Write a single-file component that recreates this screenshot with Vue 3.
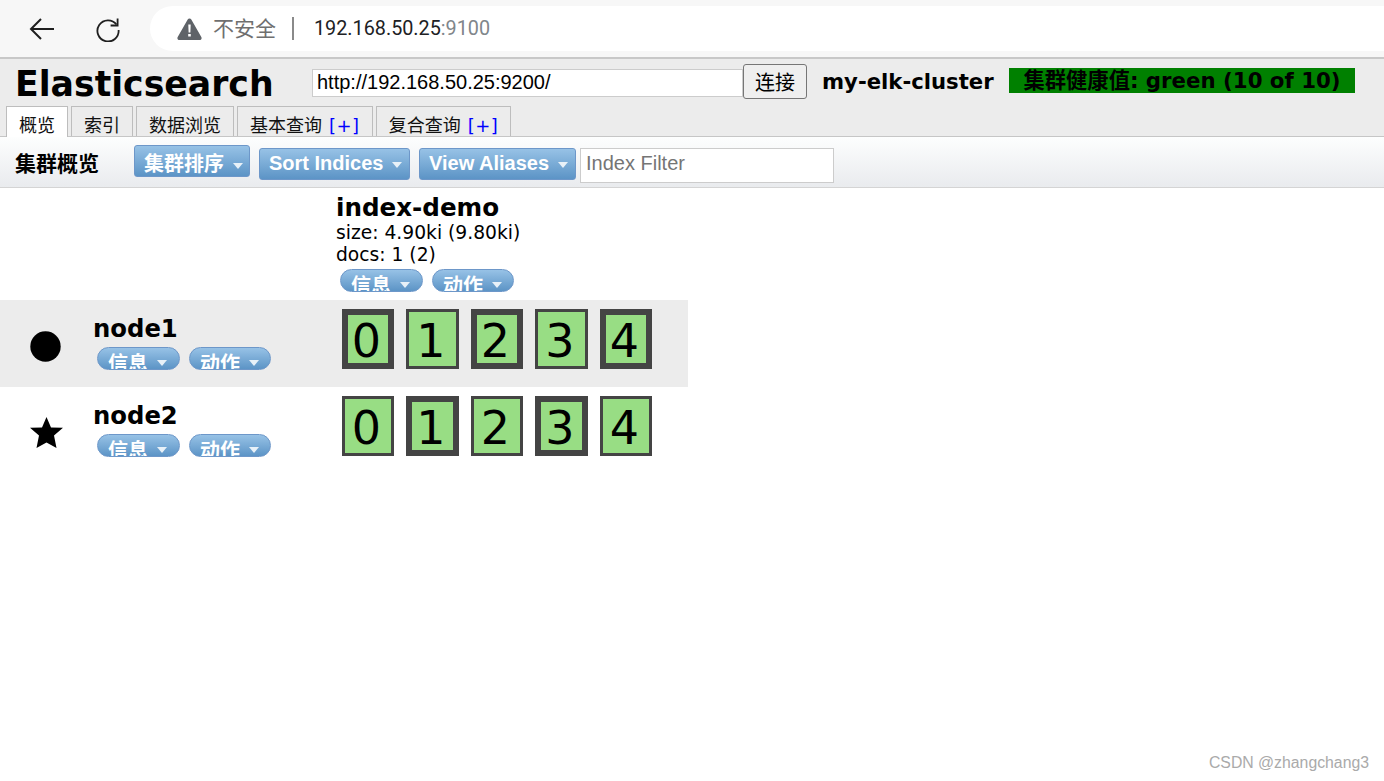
<script setup>
const tabs = [
  { label: '概览', active: true },
  { label: '索引' },
  { label: '数据浏览' },
  { label: '基本查询', plus: true },
  { label: '复合查询', plus: true },
]
const nodes = [
  { name: 'node1', shape: 'circle', alt: true, thick: [true, false, true, false, true] },
  { name: 'node2', shape: 'star', alt: false, thick: [false, true, false, true, false] },
]
</script>

<template>
  <div class="page">
    <div class="chrome">
      <svg class="back" width="28" height="24" viewBox="0 0 28 24"><path d="M26 12H3M13 2 3 12l10 10" fill="none" stroke="#1f1f1f" stroke-width="2"/></svg>
      <svg class="reload" width="26" height="26" viewBox="0 0 26 26"><path d="M21.5 8.5A10.6 10.6 0 1 0 23.6 14" fill="none" stroke="#1f1f1f" stroke-width="1.8"/><path d="M22.6 2.5v7h-7" fill="none" stroke="#1f1f1f" stroke-width="1.8"/></svg>
      <div class="omni">
        <svg class="warn" width="25" height="22" viewBox="0 0 25 22"><path d="M12.5 0.5c.8 0 1.4.4 1.8 1l10 17.6c.8 1.4-.1 2.9-1.7 2.9H2.400c-1.600 0-2.500-1.500-1.700-2.900l10-17.600c.4-.6 1-1 1.800-1z" fill="#5f6368"/><path d="M11.300 6.500h2.400l-.3 8h-1.800zM11.200 16h2.600v2.600h-2.600z" fill="#fff"/></svg>
        <span class="insecure">不安全</span>
        <span class="sep"></span>
        <span class="url">192.168.50.25<span class="port">:9100</span></span>
      </div>
    </div>

    <header class="head">
      <div class="head-top">
        <h1 class="title">Elasticsearch</h1>
        <input class="base-uri" value="http://192.168.50.25:9200/" />
        <button class="connect">连接</button>
        <span class="cluster">my-elk-cluster</span>
        <span class="health">集群健康值: green (10 of 10)</span>
      </div>
      <nav class="tabs">
        <div v-for="t in tabs" :key="t.label" class="tab" :class="{ active: t.active }">
          {{ t.label }}<span v-if="t.plus" class="plus">[+]</span>
        </div>
      </nav>
    </header>

    <div class="toolbar">
      <span class="tool-label">集群概览</span>
      <button class="drop first">集群排序<i class="caret"></i></button>
      <button class="drop sort">Sort Indices<i class="caret"></i></button>
      <button class="drop alias">View Aliases<i class="caret"></i></button>
      <input class="filter" placeholder="Index Filter" />
    </div>

    <section class="overview">
      <div class="row head-row">
        <div class="index-info">
          <h2 class="index-name">index-demo</h2>
          <div class="meta">size: 4.90ki (9.80ki)</div>
          <div class="meta">docs: 1 (2)</div>
          <div class="pills">
            <button class="pill one">信息<i class="caret small"></i></button>
            <button class="pill two">动作<i class="caret small"></i></button>
          </div>
        </div>
      </div>
      <div v-for="n in nodes" :key="n.name" class="row node" :class="{ alt: n.alt }">
        <div class="status">
          <svg v-if="n.shape === 'circle'" width="31" height="31" viewBox="0 0 31 31"><circle cx="15.500" cy="15.500" r="15.200"/></svg>
          <svg v-else class="star" width="34" height="32" viewBox="0 0 34 32"><path d="M16.500 0 21 10.500 33 10.700 24 18.500 26.500 31 16.500 25.500 6.500 31 9 18.500 0 10.700 12 10.500z"/></svg>
        </div>
        <div class="node-info">
          <div class="node-name">{{ n.name }}</div>
          <div class="pills">
            <button class="pill one">信息<i class="caret small"></i></button>
            <button class="pill two">动作<i class="caret small"></i></button>
          </div>
        </div>
        <div class="shards">
          <div v-for="(t, i) in n.thick" :key="i" class="shard" :class="{ thick: t }">{{ i }}</div>
        </div>
      </div>
    </section>

    <div class="mark">CSDN @zhangchang3</div>
  </div>
</template>

<style>
html, body { margin: 0; background: #fff; overflow: hidden; }
</style>

<style scoped>
.page {
  position: relative;
  width: 1384px;
  height: 781px;
  overflow: hidden;
  background: #fff;
  font-family: "DejaVu Sans", "Noto Sans CJK SC", sans-serif;
  color: #000;
}
.chrome {
  height: 57px;
  background: #f7f7f7;
  border-bottom: 2px solid #c8c8c8;
  display: flex;
  align-items: center;
  padding-left: 28px;
}
.back { flex: none; }
.reload { flex: none; margin-left: 39px; }
.omni {
  flex: none;
  width: 1300px;
  height: 45px;
  margin-left: 29px;
  background: #fff;
  border-radius: 23px;
  display: flex;
  align-items: center;
  padding-left: 27px;
  box-sizing: border-box;
  font-family: Roboto, "Noto Sans CJK SC", sans-serif;
}
.warn { flex: none; }
.insecure { margin: 0 0 3px 11px; font-size: 21px; color: #6f6f6f; width: 64px; white-space: nowrap; }
.sep { width: 2px; height: 23px; background: #8a8a8a; margin-left: 15px; }
.url { margin-left: 20px; font-size: 19.800px; color: #202124; }
.port { color: #80868b; }

.head { background: #ececec; height: 77px; display: flex; flex-direction: column; }
.head-top { height: 47px; box-sizing: border-box; padding-bottom: 2px; display: flex; align-items: center; }
.title { margin: 5px 0 0 15px; width: 297px; flex: none; font-size: 34.700px; line-height: 42px; font-weight: 700; white-space: nowrap; }
.base-uri {
  width: 431px; height: 28px; box-sizing: border-box; margin: 3px 0 0;
  border: 1px solid #ccc; padding: 0 4px 2px; background: #fff;
  font: 20px "Liberation Sans", sans-serif; color: #000; outline: none; flex: none;
}
.connect {
  width: 64px; height: 35px; flex: none; box-sizing: border-box; margin: 0; padding: 0;
  border: 1px solid #767676; border-radius: 3px; background: #efefef; color: #000;
  font: 20px "Noto Sans CJK SC", sans-serif;
}
.cluster { margin-left: 15px; width: 187px; flex: none; font-size: 21.200px; font-weight: 700; white-space: nowrap; }
.health {
  width: 346px; height: 25px; margin-bottom: 2px; flex: none; background: #008000; text-align: center;
  font-size: 21.300px; line-height: 25px; font-weight: 700; white-space: nowrap;
}
.tabs { display: flex; gap: 3px; padding-left: 6px; height: 30px; }
.tab {
  box-sizing: border-box; height: 30px; padding: 5px 12px 0; border: 1px solid #bdbdbd; border-bottom: 0;
  font: 18px/24px "Noto Sans CJK SC", sans-serif; color: #111; white-space: nowrap;
}
.tab.active { background: #fff; height: 31px; }
.plus { color: #00f; margin-left: 7px; font-family: "DejaVu Sans", sans-serif; font-size: 18px; letter-spacing: .5px; }

.toolbar {
  height: 52px; box-sizing: border-box; border-top: 1px solid #c6c6c6; border-bottom: 1px solid #d4d4d4;
  background: linear-gradient(#fdfefe, #e9ebee);
  display: flex; align-items: center;
}
.tool-label { margin-left: 15px; width: 119px; flex: none; font: 700 21px "Noto Sans CJK SC", sans-serif; }
.drop {
  box-sizing: border-box; height: 32px; margin: 0; padding: 0 0 2px 9px; border: 1px solid #6d97c9; border-radius: 3px;
  background: linear-gradient(#97c2e6, #5c94c6); color: #fff; flex: none;
  font: 700 20px/28px "Liberation Sans", "Noto Sans CJK SC", sans-serif; text-align: left; white-space: nowrap;
}
.first { width: 116px; margin-top: -2px; padding-top: 4px; padding-bottom: 0; }
.sort { width: 151px; margin-left: 9px; margin-top: 4px; }
.alias { width: 157px; margin-left: 9px; margin-top: 4px; }
.caret {
  display: inline-block; width: 0; height: 0; margin-left: 9px; vertical-align: middle;
  border-left: 5.500px solid transparent; border-right: 5.500px solid transparent; border-top: 6px solid #e8f1f8;
}
.filter {
  width: 254px; height: 35px; box-sizing: border-box; margin: 7px 0 0 4px; flex: none;
  border: 1px solid #ccc; padding: 0 5px 4px; background: #fff; outline: none;
  font: 20px "Liberation Sans", sans-serif;
}
.filter::placeholder { color: #757575; opacity: 1; }

.overview { width: 688px; }
.row { display: flex; }
.head-row { height: 112px; padding-left: 336px; box-sizing: border-box; }
.index-name { margin: 0; padding-top: 3px; font-size: 24.600px; line-height: 33px; font-weight: 700; white-space: nowrap; }
.meta { font-size: 18.700px; line-height: 22px; margin-top: -2px; white-space: nowrap; }
.index-info .meta + .meta { margin-top: 0; }
.index-info .pills { margin: 3px 0 0 4px; }
.pills { display: flex; gap: 9px; }
.pill {
  box-sizing: border-box; height: 23px; margin: 0; padding: 0 0 0 10px; overflow: hidden;
  border: 1px solid #6d97c9; border-radius: 12px; background: linear-gradient(#97c2e6, #5c94c6);
  color: #fff; font: 700 20px/29px "Noto Sans CJK SC", sans-serif; text-align: left; white-space: nowrap;
}
.pill.one { width: 83px; }
.pill.two { width: 82px; }
.pill .small { margin-left: 9px; margin-top: -6px; }
.node { height: 87px; }
.node.alt { background: #ececec; }
.status { width: 93px; flex: none; box-sizing: border-box; padding: 31px 0 0 30px; }
.status svg { display: block; }
.status .star { margin-top: -1px; }
.node-info { width: 249px; flex: none; padding-top: 12px; }
.node-name { font-size: 24.300px; line-height: 33px; font-weight: 700; }
.node-info .pills { margin: 2px 0 0 4px; }
.shards { display: flex; gap: 12px; padding-top: 9px; }
.shard {
  box-sizing: border-box; width: 52px; height: 60px; padding-right: 3px; border: 3px solid #444; background: #98dd84;
  text-align: center; font-size: 46px; line-height: 58px; color: #000;
}
.shard.thick { border-width: 6px; line-height: 52px; }
.shard:nth-child(2), .shard:nth-child(4) { width: 53px; }

.mark {
  position: absolute; right: 15px; bottom: 9px; color: #aaa; white-space: nowrap;
  font: 15.800px "Liberation Sans", sans-serif;
}
</style>
